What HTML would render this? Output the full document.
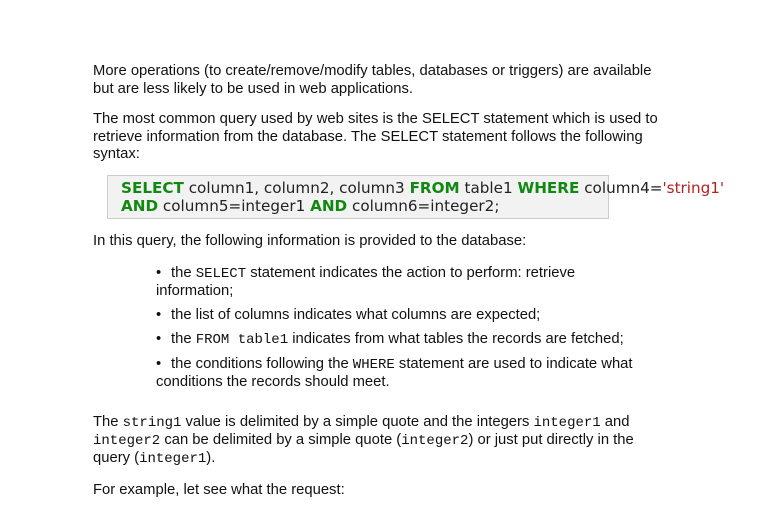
<!DOCTYPE html>
<html><head><meta charset="utf-8"><style>
body{margin:0;width:768px;height:528px;background:#fff;overflow:hidden;font-family:"Liberation Sans",sans-serif;font-size:14.8px;color:#111;position:relative}
.p{position:absolute;left:93px;line-height:17.5px;white-space:nowrap}
.m{font-family:"Liberation Mono",monospace;font-size:14px;line-height:1}
.box{position:absolute;left:107px;top:175px;width:500px;height:42px;background:#f2f2f2;border:1px solid #ccc}
.code{position:absolute;left:121px;top:180px;font-family:"DejaVu Sans",sans-serif;font-size:15.2px;line-height:17.5px;white-space:nowrap;color:#222}
.k{color:#118811;font-weight:bold}.s{color:#b22222}
.b{position:absolute;left:156px;line-height:18px;white-space:nowrap}
.d{display:inline-block;width:15px}
</style></head><body>
<div class="p" style="top:63px">More operations (to create/remove/modify tables, databases or triggers) are available<br>but are less likely to be used in web applications.</div>
<div class="p" style="top:111px">The most common query used by web sites is the SELECT statement which is used to<br>retrieve information from the database. The SELECT statement follows the following<br>syntax:</div>
<div class="box"></div>
<div class="code"><span class="k">SELECT</span> column1, column2, column3 <span class="k">FROM</span> table1 <span class="k">WHERE</span> column4=<span class="s">'string1'</span><br><span class="k">AND</span> column5=integer1 <span class="k">AND</span> column6=integer2;</div>
<div class="p" style="top:233px">In this query, the following information is provided to the database:</div>
<div class="b" style="top:264px"><span class="d">•</span>the <span class="m">SELECT</span> statement indicates the action to perform: retrieve<br>information;</div>
<div class="b" style="top:306px"><span class="d">•</span>the list of columns indicates what columns are expected;</div>
<div class="b" style="top:330px"><span class="d">•</span>the <span class="m">FROM table1</span> indicates from what tables the records are fetched;</div>
<div class="b" style="top:355px"><span class="d">•</span>the conditions following the <span class="m">WHERE</span> statement are used to indicate what<br>conditions the records should meet.</div>
<div class="p" style="top:413px;line-height:18px">The <span class="m">string1</span> value is delimited by a simple quote and the integers <span class="m">integer1</span> and<br><span class="m">integer2</span> can be delimited by a simple quote (<span class="m">integer2</span>) or just put directly in the<br>query (<span class="m">integer1</span>).</div>
<div class="p" style="top:482px">For example, let see what the request:</div>
</body></html>
